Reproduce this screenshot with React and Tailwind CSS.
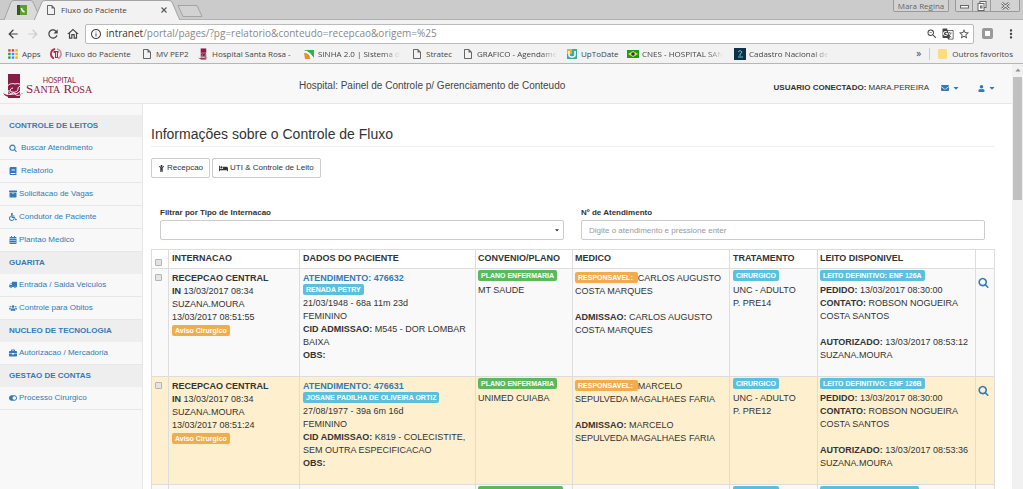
import React, { useState } from "react";
import {
  FaBook, FaArchive, FaWheelchair, FaCalendarAlt, FaTruck, FaUsers, FaBriefcase,
  FaToggleOn, FaChild, FaBed, FaEnvelope, FaUser, FaCaretDown, FaCaretUp,
} from "react-icons/fa";
import {
  MdArrowBack, MdArrowForward, MdRefresh, MdOutlineHome, MdInfoOutline, MdZoomOut,
  MdStarBorder, MdMoreVert, MdGTranslate, MdOutlineInsertDriveFile,
} from "react-icons/md";

const SearchIcon = ({ className }) => (
  <svg viewBox="0 0 1792 1792" fill="currentColor" className={className} aria-hidden="true">
    <path d="M1216 832q0-185-131.5-316.5t-316.5-131.5-316.5 131.5-131.5 316.5 131.5 316.5 316.5 131.5 316.5-131.5 131.5-316.5zm512 832q0 52-38 90t-90 38q-54 0-90-38l-343-342q-179 124-399 124-143 0-273.5-55.5t-225-150-150-225-55.5-273.5 55.5-273.5 150-225 225-150 273.5-55.5 273.5 55.5 225 150 150 225 55.5 273.5q0 220-124 399l343 343q37 37 37 90z" />
  </svg>
);

const RoseIcon = ({ className }) => (
  <svg viewBox="0 0 20 26" className={className} aria-hidden="true">
    <rect x="5" y="1" width="12" height="24" fill="#8a1c45" />
    <path d="M0 20c4 3 9 2 11-1 3 3 6 3 9 1-2 3-6 5-9 3-4 2-9 1-11-3z" fill="#8a1c45" />
    <path d="M4 14c1-3 5-4 8-3 3-1 6 0 7 2-3 0-4 1-4 3s-3 4-6 3c-3 0-2-4 1-4M6 17c-1 2 1 5 5 4 3 0 6-2 7-4M2 20c3 2 7 2 9-1M11 20c2 3 5 3 8 1" fill="none" stroke="#fff" strokeWidth="1" />
  </svg>
);

const AppsIcon = () => (
  <svg viewBox="0 0 10 10" className="size-3">
    {["#db4437", "#db4437", "#f4b400", "#0f9d58", "#4285f4", "#f4b400", "#0f9d58", "#4285f4", "#f4b400"].map((c, i) => (
      <rect key={i} x={(i % 3) * 3 + 1} y={Math.floor(i / 3) * 3 + 1} width="2" height="2" fill={c} />
    ))}
  </svg>
);

const FluxoIcon = () => (
  <svg viewBox="0 0 12 12" className="size-3">
    <path d="M5 1A5 5 0 0 0 4 10.500" fill="none" stroke="#c2264f" strokeWidth="1.800" />
    <path d="M7 1A5 5 0 0 1 8 10.500" fill="none" stroke="#d98a9c" strokeWidth="1.600" />
    <path d="M3.500 3h5v2H8v5H5V5H3.500z" fill="#b0264d" />
    <path d="M6.500 4v5" stroke="#fff" strokeWidth=".8" />
  </svg>
);

const SinhaIcon = () => (
  <svg viewBox="0 0 12 12" className="size-3">
    <path d="M1 2h10v8L7 5z" fill="#2eb34a" />
    <path d="M3 3l7 7" stroke="#fff" strokeWidth="1.500" />
    <path d="M1 5c4 0 6 2 6 6H2z" fill="#f58a1f" />
  </svg>
);

const UpToDateIcon = () => (
  <svg viewBox="0 0 12 12" className="size-3">
    <rect x="1" y="1" width="10" height="10" fill="#3aa99f" />
    <rect x="1" y="1" width="5" height="5" fill="#e2b13c" />
    <path d="M3 3v4q0 2 3 2t3-2V3" fill="none" stroke="#fff" strokeWidth="1.500" />
  </svg>
);

const BrazilIcon = () => (
  <svg viewBox="0 0 12 12" className="size-3">
    <rect y="2" width="12" height="8" fill="#1b9a1b" />
    <path d="M6 3l5 3-5 3-5-3z" fill="#f5e11c" />
    <circle cx="6" cy="6" r="1.800" fill="#1c2f9a" />
  </svg>
);

const CadastroIcon = () => (
  <svg viewBox="0 0 12 12" className="size-3">
    <rect width="12" height="12" fill="#0d3146" />
    <path d="M4 4q2-3 4 0-1 2-2 2v2M4 9h5" fill="none" stroke="#5cc3d0" />
  </svg>
);

const PageIcon = () => <MdOutlineInsertDriveFile className="size-3 text-[#666]" />;

const bookmarks = [
  { label: "Apps", icon: AppsIcon, width: "w-[43px]" },
  { label: "Fluxo do Paciente", icon: FluxoIcon, width: "w-[91px]" },
  { label: "MV PEP2", icon: PageIcon, width: "w-[56px]" },
  { label: "Hospital Santa Rosa -", icon: () => <RoseIcon className="size-3" />, width: "w-[106px]" },
  { label: "SINHA 2.0 | Sistema d", icon: SinhaIcon, width: "w-[108px]", fade: true },
  { label: "Stratec", icon: PageIcon, width: "w-[51px]" },
  { label: "GRAFICO - Agendame", icon: PageIcon, width: "w-[104px]", fade: true },
  { label: "UpToDate", icon: UpToDateIcon, width: "w-[61px]" },
  { label: "CNES - HOSPITAL SAN", icon: BrazilIcon, width: "w-[107px]", fade: true },
  { label: "Cadastro Nacional de", icon: CadastroIcon, width: "w-[106px]", fade: true },
];

const menu = [
  {
    title: "CONTROLE DE LEITOS",
    items: [
      { label: "Buscar Atendimento", icon: SearchIcon, wide: true },
      { label: "Relatorio", icon: FaBook, wide: true },
      { label: "Solicitacao de Vagas", icon: FaArchive },
      { label: "Condutor de Paciente", icon: FaWheelchair },
      { label: "Plantao Medico", icon: FaCalendarAlt },
    ],
  },
  {
    title: "GUARITA",
    items: [
      { label: "Entrada / Saida Veiculos", icon: FaTruck, flip: true },
      { label: "Controle para Obitos", icon: FaUsers },
    ],
  },
  { title: "NUCLEO DE TECNOLOGIA", items: [{ label: "Autorizacao / Mercadoria", icon: FaBriefcase }] },
  { title: "GESTAO DE CONTAS", items: [{ label: "Processo Cirurgico", icon: FaToggleOn }] },
];

const rows = [
  {
    id: "476632",
    entrada: "13/03/2017 08:34",
    registro: "13/03/2017 08:51:55",
    paciente: "RENADA PETRY",
    nascimento: "21/03/1948 - 68a 11m 23d",
    cid: "M545 - DOR LOMBAR BAIXA",
    plano: "PLANO ENFERMARIA",
    convenio: "MT SAUDE",
    medico: "CARLOS AUGUSTO COSTA MARQUES",
    sala: "P. PRE14",
    leito: "ENF 126A",
    autorizado: "13/03/2017 08:53:12",
    bg: "bg-[#f9f9f9]",
  },
  {
    id: "476631",
    entrada: "13/03/2017 08:34",
    registro: "13/03/2017 08:51:24",
    paciente: "JOSANE PADILHA DE OLIVEIRA ORTIZ",
    nascimento: "27/08/1977 - 39a 6m 16d",
    cid: "K819 - COLECISTITE, SEM OUTRA ESPECIFICACAO",
    plano: "PLANO ENFERMARIA",
    convenio: "UNIMED CUIABA",
    medico: "MARCELO SEPULVEDA MAGALHAES FARIA",
    sala: "P. PRE12",
    leito: "ENF 126B",
    autorizado: "13/03/2017 08:53:36",
    bg: "bg-[#fef0cf]",
  },
];

const badgeColors = {
  info: "bg-[#5bc0de]",
  success: "bg-[#5cb85c]",
  warning: "bg-[#f0ad4e]",
};

const Badge = ({ color, children }) => (
  <span className={`inline-block h-[11px] whitespace-nowrap rounded-xs px-[3px] align-top text-[7px] leading-[11px] font-bold text-white ${badgeColors[color]}`}>
    {children}
  </span>
);

const Check = ({ label }) => (
  <input
    type="checkbox"
    aria-label={label}
    className="block size-[7px] appearance-none rounded-[1px] border border-[#b4b4b4] bg-[#e4e4e4] checked:bg-[#337ab7]"
  />
);

const Browser = () => (
  <div className="shrink-0 bg-[#f2f2f2] font-['Open_Sans',sans-serif] text-[#444]">
    {/* Tab strip */}
    <div className="flex h-5 items-start justify-between border-b border-[#b0b0b0] bg-[#cbcbcb]">
      <div className="relative flex h-5 w-[204px] items-center">
        <svg viewBox="0 0 204 20" className="absolute inset-0 h-5 w-[204px]" fill="#dadada" stroke="#a3a3a3">
          <path d="M4 20L11 2Q12 .5 14 .5H30Q32 .5 33 2L41 20" />
          <path d="M178 5.500H197L202 16.500H183z" fill="#d2d2d2" />
          <path d="M34 20.500L42 2Q43 .5 45 .5H168Q171 .5 172 2L180 20.500" fill="#f2f2f2" />
        </svg>
        <svg viewBox="0 0 10 10" className="relative ml-[17px] size-2.5">
          <rect width="10" height="10" fill="#2f5b1c" />
          <rect x="3" width="7" height="10" fill="#5c9f2a" />
          <path d="M4.500 3q0 3 3 4" stroke="#fff" strokeWidth="1.500" fill="none" />
        </svg>
        <MdOutlineInsertDriveFile className="relative ml-[18px] size-3 text-[#666]" />
        <span className="relative ml-1 w-[100px] text-[8px]">Fluxo do Paciente</span>
        <button aria-label="Fechar" className="relative">
          <svg viewBox="0 0 6 6" className="size-1.5" stroke="#555" strokeWidth="1.100">
            <path d="M.5.5l5 5M5.500.5l-5 5" />
          </svg>
        </button>
      </div>
      <div className="flex h-3 gap-1.5 pr-[3px] text-[#666]">
        <button className="w-14 rounded-b-xs border border-t-0 border-[#999] bg-[#d2d2d2] text-[8px] leading-[11px]">Mara Regina</button>
        <div className="flex divide-x divide-[#999] rounded-b-xs border border-t-0 border-[#999] bg-[#d2d2d2]">
          <button aria-label="Minimizar" className="flex w-[17px] items-center justify-center">
            <svg viewBox="0 0 9 9" className="size-[9px]" fill="#fff" stroke="#666"><rect x=".5" y="4.500" width="8" height="2.500" /></svg>
          </button>
          <button aria-label="Restaurar" className="flex w-[18px] items-center justify-center">
            <svg viewBox="0 0 10 10" className="size-2.5" fill="#fff" stroke="#666"><rect x="3" y=".5" width="6" height="6" /><rect x="1" y="2.500" width="6" height="7" /><rect x="3.500" y="5" width="1.500" height="2" /></svg>
          </button>
          <button aria-label="Fechar janela" className="flex w-7 items-center justify-center">
            <svg viewBox="0 0 9 8" className="h-2 w-[9px]" fill="none"><path d="M1 1l7 6M8 1L1 7" stroke="#666" strokeWidth="2.600" /><path d="M1 1l7 6M8 1L1 7" stroke="#fff" /></svg>
          </button>
        </div>
      </div>
    </div>

    {/* Toolbar */}
    <div className="flex h-6 items-center pt-[3px] pl-1.5">
      <div className="flex w-[79px] shrink-0 items-center gap-1.5">
        <button aria-label="Voltar"><MdArrowBack className="size-3.5" /></button>
        <button aria-label="Avancar"><MdArrowForward className="size-3.5 text-[#ccc]" /></button>
        <button aria-label="Recarregar"><MdRefresh className="size-3.5" /></button>
        <button aria-label="Inicio"><MdOutlineHome className="size-3.5" /></button>
      </div>
      <div className="flex h-5 flex-1 items-center rounded-xs border border-[#bbb] bg-white pr-[3px] pl-1">
        <MdInfoOutline className="size-3 shrink-0" />
        <p className="ml-1 flex-1 text-[10px] whitespace-nowrap text-[#888]">
          <span className="text-[#333]">intranet</span>/portal/pages/?pg=relatorio&amp;conteudo=recepcao&amp;origem=%25
        </p>
        <div className="flex items-center gap-1">
          <MdZoomOut className="size-3" />
          <MdGTranslate className="size-3" />
          <MdStarBorder className="size-3" />
        </div>
      </div>
      <div className="flex w-[49px] shrink-0 items-center justify-between pr-[5px] pl-2">
        <span className="block size-[11px] rounded-xs border-3 border-[#999] bg-white" />
        <button aria-label="Menu"><MdMoreVert className="size-3.5" /></button>
      </div>
    </div>

    {/* Bookmarks */}
    <div className="flex h-5 items-center border-b border-[#b6b6b6] pl-[7px] text-[8px] whitespace-nowrap">
      {bookmarks.map(({ label, icon: Icon, width, fade }) => (
        <a href="#" key={label} className={`flex shrink-0 items-center gap-[3px] ${width}`}>
          <span className="shrink-0"><Icon /></span>
          <span className={fade ? "mask-r-from-80%" : ""}>{label}</span>
        </a>
      ))}
      <div className="ml-auto flex items-center gap-2 pr-2.5">
        <span className="text-[10px]">»</span>
        <span className="h-3 w-px bg-[#ccc]" />
        <a href="#" className="flex items-center gap-[5px]">
          <span className="h-2.5 w-[9px] rounded-[1px] bg-[#fbdc80]" />
          Outros favoritos
        </a>
      </div>
    </div>
  </div>
);

const Header = () => (
  <header className="flex h-10 shrink-0 items-center border-b border-[#e7e7e7] bg-[#f8f8f8] pt-[9px] pr-4 pb-1 pl-[3px]">
    <a href="#" className="flex w-[296px] items-center text-[#8a1c45]">
      <RoseIcon className="h-[26px] w-5" />
      <span className="ml-[3px] flex flex-col items-center font-['Liberation_Serif',serif]">
        <span className="font-['Lato',sans-serif] text-[7px] leading-[7px]">HOSPITAL</span>
        <span className="text-[13px] leading-[10px]">S<span className="text-[10px]">ANTA</span> R<span className="text-[10px]">OSA</span></span>
      </span>
    </a>
    <p className="flex-1 text-[10px] leading-4 text-[#444]">Hospital: Painel de Controle p/ Gerenciamento de Conteudo</p>
    <div className="flex items-center pt-1">
      <p className="text-[8px]"><b>USUARIO CONECTADO:</b> MARA.PEREIRA</p>
      <button aria-label="Mensagens" className="ml-3 flex items-center gap-[3px] text-[#337ab7]">
        <FaEnvelope className="size-2" /><FaCaretDown className="size-2" />
      </button>
      <button aria-label="Usuario" className="ml-[18px] flex items-center gap-[3px] text-[#337ab7]">
        <FaUser className="size-[7px]" /><FaCaretDown className="size-2" />
      </button>
    </div>
  </header>
);

const Sidebar = () => (
  <nav className="w-[143px] shrink-0 border-r border-[#e7e7e7] bg-[#f8f8f8] pt-[11px] text-[8px] text-[#337ab7]">
    {menu.map((group) => (
      <div key={group.title}>
        <h2 className="h-[22px] bg-[#eee] pl-[9px] leading-[22px] font-bold">{group.title}</h2>
        <ul>
          {group.items.map(({ label, icon: Icon, flip, wide }) => (
            <li key={label} className="border-b border-[#e7e7e7]">
              <a href="#" className={`flex h-[22px] items-center pl-[9px] ${wide ? "gap-1" : "gap-0.5"}`}>
                <Icon className={`size-2 ${flip ? "-scale-x-100" : ""}`} />
                {label}
              </a>
            </li>
          ))}
        </ul>
      </div>
    ))}
  </nav>
);

const PatientRow = ({ row }) => (
  <tr className={row.bg}>
    <td className="border border-[#ddd] px-[3px] pt-[5px]"><Check label={`Selecionar ${row.id}`} /></td>
    <td className="border border-[#ddd] px-[3px] pt-[3px]">
      <b>RECEPCAO CENTRAL</b><br />
      <b>IN</b> {row.entrada}<br />
      SUZANA.MOURA<br />
      {row.registro}
      <div className="pt-px leading-[11px]"><Badge color="warning">Aviso Cirurgico</Badge></div>
    </td>
    <td className="border border-[#ddd] px-[3px] pt-[3px] pb-3.5">
      <a href="#" className="block leading-3 font-bold text-[#337ab7]">ATENDIMENTO: {row.id}</a>
      <div className="pb-0.5 leading-[11px]"><Badge color="info">{row.paciente}</Badge></div>
      {row.nascimento}<br />
      FEMININO<br />
      <b>CID ADMISSAO:</b> {row.cid}<br />
      <b>OBS:</b>
    </td>
    <td className="border border-[#ddd] px-0.5 pt-px">
      <div className="pb-[3px] leading-[11px]"><Badge color="success">{row.plano}</Badge></div>
      {row.convenio}
    </td>
    <td className="border border-[#ddd] px-0.5 pt-[3px]">
      <Badge color="warning">RESPONSAVEL:&nbsp;</Badge>{row.medico}<br />
      <br />
      <b>ADMISSAO:</b> {row.medico}
    </td>
    <td className="border border-[#ddd] px-[3px] pt-px">
      <div className="pb-[3px] leading-[11px]"><Badge color="info">CIRURGICO</Badge></div>
      UNC - ADULTO<br />
      {row.sala}
    </td>
    <td className="border border-[#ddd] px-0.5 pt-px">
      <div className="pb-[3px] leading-[11px]"><Badge color="info">LEITO DEFINITIVO: {row.leito}</Badge></div>
      <b>PEDIDO:</b> 13/03/2017 08:30:00<br />
      <b>CONTATO:</b> ROBSON NOGUEIRA COSTA SANTOS<br />
      <br />
      <b>AUTORIZADO:</b> {row.autorizado} SUZANA.MOURA
    </td>
    <td className="border border-[#ddd] px-0.5 pt-2 text-[#337ab7]">
      <button aria-label="Detalhes" className="block"><SearchIcon className="size-[11px]" /></button>
    </td>
  </tr>
);

const App = () => {
  const [atendimento, setAtendimento] = useState("");

  return (
    <div className="flex h-screen flex-col overflow-hidden bg-white font-['Liberation_Sans',Arial,sans-serif] text-[#333]">
      <Browser />
      <div className="flex min-h-0 flex-1">
        <div className="flex min-w-0 flex-1 flex-col">
          <Header />
          <div className="flex min-h-0 flex-1">
            <Sidebar />
            <main className="min-w-0 flex-1 overflow-hidden pt-5 pr-[18px] pl-2">
              <h1 className="border-b border-[#eee] pb-0.5 text-[14px] leading-5">Informações sobre o Controle de Fluxo</h1>

              <div className="mt-[11px] flex gap-0.5 text-[8px]">
                <button className="flex h-5 items-center gap-0.5 rounded-xs border border-[#ccc] px-1.5">
                  <FaChild className="size-[7px]" /> Recepcao
                </button>
                <button className="flex h-5 items-center gap-0.5 rounded-xs border border-[#ccc] px-1.5">
                  <FaBed className="size-[9px]" /> UTI &amp; Controle de Leito
                </button>
              </div>

              {/* Filters */}
              <div className="mt-7 grid grid-cols-2 gap-[17px] px-[9px] text-[8px]">
                <div>
                  <label htmlFor="tipo" className="block leading-[14px] font-bold">Filtrar por Tipo de Internacao</label>
                  <div className="relative">
                    <select id="tipo" className="block h-5 w-full appearance-none rounded-xs border border-[#ccc] bg-white px-2">
                      <option value=""></option>
                    </select>
                    <FaCaretDown className="pointer-events-none absolute top-[7px] right-1 size-1.5" />
                  </div>
                </div>
                <div>
                  <label htmlFor="atendimento" className="block leading-[14px] font-bold">Nº de Atendimento</label>
                  <input
                    id="atendimento"
                    type="text"
                    value={atendimento}
                    onChange={(e) => setAtendimento(e.target.value)}
                    placeholder="Digite o atendimento e pressione enter"
                    className="block h-5 w-full rounded-xs border border-[#ccc] px-[7px] placeholder:text-[#999]"
                  />
                </div>
              </div>

              <table className="mt-[9px] w-full table-fixed border-collapse text-[9px] leading-[13px] [&_td]:align-top">
                <colgroup>
                  <col className="w-[17px]" />
                  <col className="w-[131px]" />
                  <col className="w-[176px]" />
                  <col className="w-[97px]" />
                  <col className="w-[157px]" />
                  <col className="w-[88px]" />
                  <col className="w-[158px]" />
                  <col className="w-[19px]" />
                </colgroup>
                <thead>
                  <tr className="text-left">
                    <th className="border border-[#ddd] px-[3px] pb-0.5 align-bottom"><Check label="Selecionar todos" /></th>
                    <th className="border border-[#ddd] px-[3px] pt-0.5 pb-[3px]">INTERNACAO</th>
                    <th className="border border-[#ddd] px-[3px] pt-0.5 pb-[3px]">DADOS DO PACIENTE</th>
                    <th className="border border-[#ddd] px-0.5 pt-0.5 pb-[3px]">CONVENIO/PLANO</th>
                    <th className="border border-[#ddd] px-0.5 pt-0.5 pb-[3px]">MEDICO</th>
                    <th className="border border-[#ddd] px-[3px] pt-0.5 pb-[3px]">TRATAMENTO</th>
                    <th className="border border-[#ddd] px-0.5 pt-0.5 pb-[3px]">LEITO DISPONIVEL</th>
                    <th className="border border-[#ddd]"></th>
                  </tr>
                </thead>
                <tbody>
                  {rows.map((row) => <PatientRow key={row.id} row={row} />)}
                  <tr className="bg-[#f9f9f9]">
                    <td className="border border-[#ddd]"></td>
                    <td className="border border-[#ddd]"></td>
                    <td className="border border-[#ddd]"></td>
                    <td className="border border-[#ddd] px-0.5 pt-px"><Badge color="success">PLANO APARTAMENTO</Badge></td>
                    <td className="border border-[#ddd]"></td>
                    <td className="border border-[#ddd] px-[3px] pt-px"><Badge color="info">CIRURGICO</Badge></td>
                    <td className="border border-[#ddd] px-0.5 pt-px"><Badge color="info">LEITO DEFINITIVO: APT 142</Badge></td>
                    <td className="border border-[#ddd]"></td>
                  </tr>
                </tbody>
              </table>
            </main>
          </div>
        </div>

        {/* Scrollbar */}
        <div className="flex w-[11px] shrink-0 flex-col items-center bg-[#f1f1f1] pt-0.5">
          <FaCaretUp className="size-2 text-[#888]" />
          <div className="mt-[3px] h-[29%] w-[9px] bg-[#c1c1c1]" />
        </div>
      </div>
    </div>
  );
};

export default App;
